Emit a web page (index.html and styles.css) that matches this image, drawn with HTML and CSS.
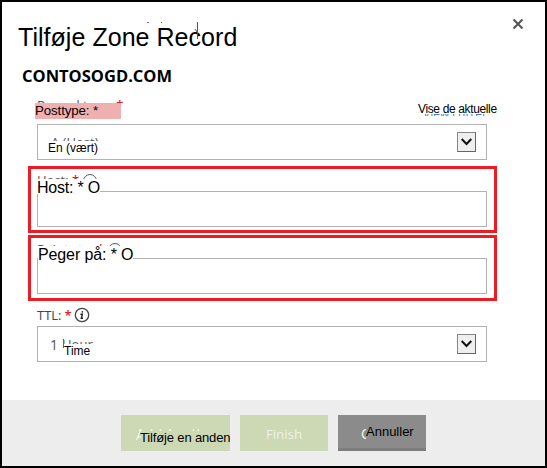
FILE: index.html
```html
<!DOCTYPE html>
<html lang="da">
<head>
<meta charset="utf-8">
<title>Tilføje Zone Record</title>
<link rel="stylesheet" href="styles.css">
</head>
<body>
<main class="dialog">
  <header class="header">
    <h1 class="title">Tilføje Zone Record</h1>
    <h2 class="domain">CONTOSOGD.COM</h2>
    <svg class="specks" width="70" height="22" viewBox="0 0 70 22"><path d="M7 2.500h2M21 2.500h1" stroke="#777"/><path d="M57.500 2v17M55 9l2 3" stroke="#555" fill="none"/></svg>
    <svg class="close" width="12" height="12" viewBox="0 0 12 12"><path d="M1.500 1.500l9 9M10.500 1.500l-9 9" stroke="#555" stroke-width="2.100"/></svg>
  </header>
  <form class="form">
    <section class="field type">
      <span class="ghost ghost-type">Record type: <b>*</b></span>
      <label class="label highlight">Posttype: *</label>
      <span class="ghost ghost-link">View current</span>
      <a class="link">Vise de aktuelle</a>
      <div class="box">
        <span class="ghost ghost-a">A (Host)</span>
        <span class="value value-type">En (vært)</span>
        <span class="arrow"><svg width="11" height="8" viewBox="0 0 11 8"><path d="M.7 1l4.800 5L10.300 1" fill="none" stroke="#111" stroke-width="2"/></svg></span>
      </div>
    </section>
    <section class="field marked host">
      <div class="box"></div>
      <span class="ghost ghost-host">Host: <b>*</b><i class="ring"></i></span>
      <label class="label large">Host: * O</label>
    </section>
    <section class="field marked points">
      <div class="box"></div>
      <span class="ghost ghost-points">Points to: <b>*</b><i class="ring"></i></span>
      <label class="label large">Peger på: * O</label>
    </section>
    <section class="field ttl">
      <div class="ttl-label"><span>TTL:</span><b>*</b>
        <svg width="16" height="16" viewBox="0 0 16 16"><circle cx="8" cy="8" r="6.700" fill="none" stroke="#444" stroke-width="1.300"/><path d="M6.400 7.300h2l-1.100 4h1.700M8.500 4.200l-.3 1.400" fill="none" stroke="#222" stroke-width="1.400"/></svg>
      </div>
      <div class="box">
        <span class="number">1</span>
        <span class="ghost ghost-hour">Hour</span>
        <span class="stem"></span>
        <span class="value value-time">Time</span>
        <span class="arrow"><svg width="11" height="8" viewBox="0 0 11 8"><path d="M.7 1l4.800 5L10.300 1" fill="none" stroke="#111" stroke-width="2"/></svg></span>
      </div>
    </section>
  </form>
  <footer class="footer">
    <div class="button add"><span class="ghost ghost-add">Add Another</span><svg class="slope" width="5" height="12" viewBox="0 0 5 12"><path d="M.7 11L4.500 1M2 8h3" fill="none" stroke="#f4f6ee" stroke-width="1.200"/></svg><span class="caption caption-add">Tilføje en anden</span></div>
    <div class="button finish">Finish</div>
    <div class="button cancel"><span class="ghost ghost-cancel">C</span><span class="caption caption-cancel">Annuller</span></div>
  </footer>
</main>
</body>
</html>
```

FILE: styles.css
```css
* { box-sizing: border-box; }
body { margin: 0; font-family: "Liberation Sans", sans-serif; color: #000; }
.dialog {
  width: 547px; height: 468px; border: 2px solid #000; background: #fff;
  display: flex; flex-direction: column;
}
.header { position: relative; height: 96px; padding: 20px 0 0 16px; }
.title { margin: 0; font-size: 25px; line-height: 30px; font-weight: 400; white-space: nowrap; letter-spacing: .04px; }
.domain { margin: 12px 0 0 4px; font: 700 16.5px/24px "Open Sans", sans-serif; }
.specks { position: absolute; left: 138px; top: 18px; }
.close { position: absolute; left: 510px; top: 16px; }

.form { flex: 1; display: flex; flex-direction: column; padding-left: 26px; }
.field { position: relative; width: 469px; }
.type { height: 68px; padding: 26px 10px 0 9px; }
.box { position: relative; height: 36px; border: 1px solid #b2b2b2; }
.marked { border: 3px solid #ed1c24; padding: 0 7px 0 6px; }
.host { height: 67px; padding-top: 22px; margin-bottom: 2px; }
.points { height: 66px; padding-top: 20px; }
.ttl { padding: 4px 10px 0 9px; }

.ghost {
  position: absolute; overflow: hidden; white-space: nowrap; color: #555;
  font-family: "Open Sans", sans-serif; font-size: 13px; line-height: 18px;
}
.ghost b, .ttl-label b { color: #e02028; font-weight: 600; }
.ring { display: inline-block; width: 14px; height: 14px; margin-left: 4px; border: 1px solid #555; border-radius: 50%; vertical-align: -3px; }
.label { position: absolute; white-space: nowrap; }
.highlight { left: 7px; top: 5px; width: 86px; height: 16px; background: #f0b0b0; font-size: 13.3px; line-height: 15px; letter-spacing: -.12px; }
.large { left: 6px; background: #fff; font-size: 16px; line-height: 17px; letter-spacing: -.2px; }
.host .large { top: 10px; height: 15px; }
.points .large { left: 7px; top: 8px; height: 16px; letter-spacing: -.12px; }
.link { position: absolute; left: 390px; top: 4px; font-size: 12px; line-height: 14px; letter-spacing: -.36px; white-space: nowrap; }
.value { position: absolute; font-size: 12px; line-height: 14px; white-space: nowrap; }
.value-type { left: 10px; top: 16px; }
.value-time { left: 26px; top: 17px; }
.ghost-type { left: 9px; top: 1px; height: 4px; line-height: 12px; }
.ghost-link { left: 395px; top: 16px; height: 2px; width: 64px; line-height: 0; color: #3979d9; font-size: 12px; }
.ghost-a { left: 13px; top: 12px; height: 4px; line-height: 10px; }
.ghost-host { left: 6px; top: 5px; height: 5px; line-height: 12px; }
.ghost-points { left: 6px; top: 5px; height: 3px; line-height: 12px; }
.ghost-hour { left: 24px; top: 12px; height: 5px; line-height: 10px; }
.stem { position: absolute; left: 25px; top: 12px; width: 1px; height: 9px; background: #666; }
.number { position: absolute; left: 12px; top: 8px; color: #555; font: 14px/20px "Open Sans", sans-serif; }
.arrow {
  position: absolute; right: 10px; top: 7px; width: 19px; height: 20px;
  display: flex; justify-content: center; padding-top: 5px;
  background: #efefef; border: 1px solid #888; border-right-color: #666; border-bottom-color: #666;
}
.ttl-label { display: flex; height: 21px; align-items: center; gap: 3px; padding-bottom: 2px; color: #444; font: 13px/18px "Open Sans", sans-serif; }
.ttl-label b { width: 6px; }

.footer { height: 66px; background: #ededed; display: flex; gap: 10px; padding: 15px 0 0 119px; }
.button { position: relative; width: 88px; height: 36px; background: #cdd8b4; }
.add { width: 109px; }
.finish { color: #eef2e6; font: 500 13.3px/38px "Open Sans", sans-serif; text-align: center; }
.cancel { background: #8b8b8b; border-bottom: 3px solid #7d7d7d; }
.caption { position: absolute; white-space: nowrap; font-size: 13px; line-height: 16px; }
.caption-add { left: 19px; top: 15px; letter-spacing: -.15px; }
.caption-cancel { left: 28px; top: 9px; }
.button .ghost { color: #f4f6ee; font-size: 14px; }
.ghost-add { left: 15px; top: 14px; height: 2px; line-height: 10px; }
.slope { position: absolute; left: 15px; top: 14px; }
.ghost-cancel { left: 23px; top: 10px; width: 5px; }
```
